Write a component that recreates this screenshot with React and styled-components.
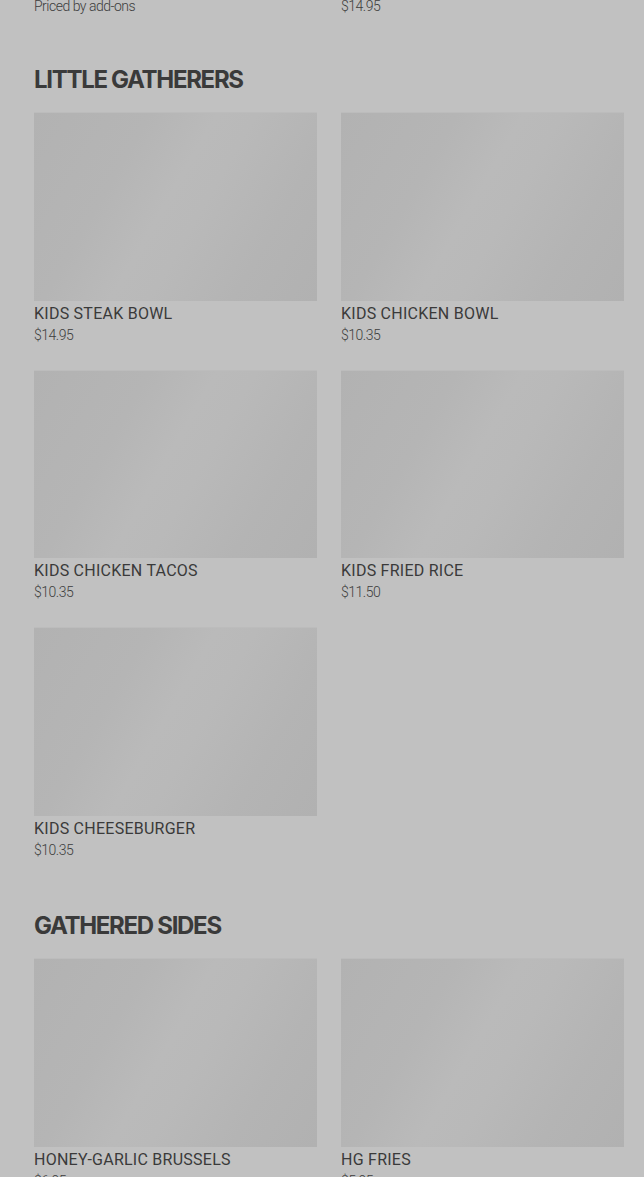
import styled, { createGlobalStyle } from "styled-components";

const GlobalStyle = createGlobalStyle`
  html, body {
    margin: 0;
    background: #c1c1c1;
  }
  body {
    font-family: Roboto, "Liberation Sans", sans-serif;
    color: #3b3b3b;
    overflow: hidden;
  }
`;

const Page = styled.main`
  padding: 0 20px 0 34px;
  margin-top: -4px;
`;

const Grid = styled.div`
  display: grid;
  grid-template-columns: 283px 283px;
  column-gap: 24px;
  row-gap: 25px;
`;

const Section = styled.section`
  margin-top: 48px;

  & + & {
    margin-top: 50px;
  }
`;

const Heading = styled.h2`
  margin: 0 0 16px;
  font-family: Inter, "Liberation Sans", sans-serif;
  font-weight: 700;
  font-size: 24px;
  line-height: 32px;
  letter-spacing: -1.3px;
  color: #3a3a3a;
  text-transform: uppercase;
`;

const Card = styled.article`
  display: flex;
  flex-direction: column;
`;

const Thumb = styled.div`
  aspect-ratio: 3 / 2;
  background: linear-gradient(
    120deg,
    #b2b2b2 0%,
    #b5b5b5 30%,
    #bababa 47%,
    #b9b9b9 57%,
    #b4b4b4 78%,
    #b1b1b1 100%
  );
  box-shadow: inset 0 1px 0 #bcbcbc;
`;

const Title = styled.h3`
  margin: 2px 0 0;
  font-size: 16px;
  font-weight: 400;
  line-height: 22px;
  text-transform: uppercase;
  letter-spacing: 0.25px;
  color: #3a3a3a;
`;

const Price = styled.p`
  margin: 0;
  font-size: 14px;
  font-weight: 300;
  line-height: 20px;
  letter-spacing: -0.5px;
  color: #3d3d3d;
`;

const MenuCard = ({ name, price }) => (
  <Card>
    <Thumb />
    <Title>{name}</Title>
    <Price>{price}</Price>
  </Card>
);

const sections = [
  {
    title: "Little Gatherers",
    items: [
      ["Kids Steak Bowl", "$14.95"],
      ["Kids Chicken Bowl", "$10.35"],
      ["Kids Chicken Tacos", "$10.35"],
      ["Kids Fried Rice", "$11.50"],
      ["Kids Cheeseburger", "$10.35"],
    ],
  },
  {
    title: "Gathered Sides",
    items: [
      ["Honey-Garlic Brussels", "$6.95"],
      ["HG Fries", "$5.95"],
    ],
  },
];

export default function App() {
  return (
    <>
      <GlobalStyle />
      <Page>
        <Grid>
          <Price>Priced by add-ons</Price>
          <Price>$14.95</Price>
        </Grid>
        {sections.map((s) => (
          <Section key={s.title}>
            <Heading>{s.title}</Heading>
            <Grid>
              {s.items.map(([name, price]) => (
                <MenuCard key={name} name={name} price={price} />
              ))}
            </Grid>
          </Section>
        ))}
      </Page>
    </>
  );
}
